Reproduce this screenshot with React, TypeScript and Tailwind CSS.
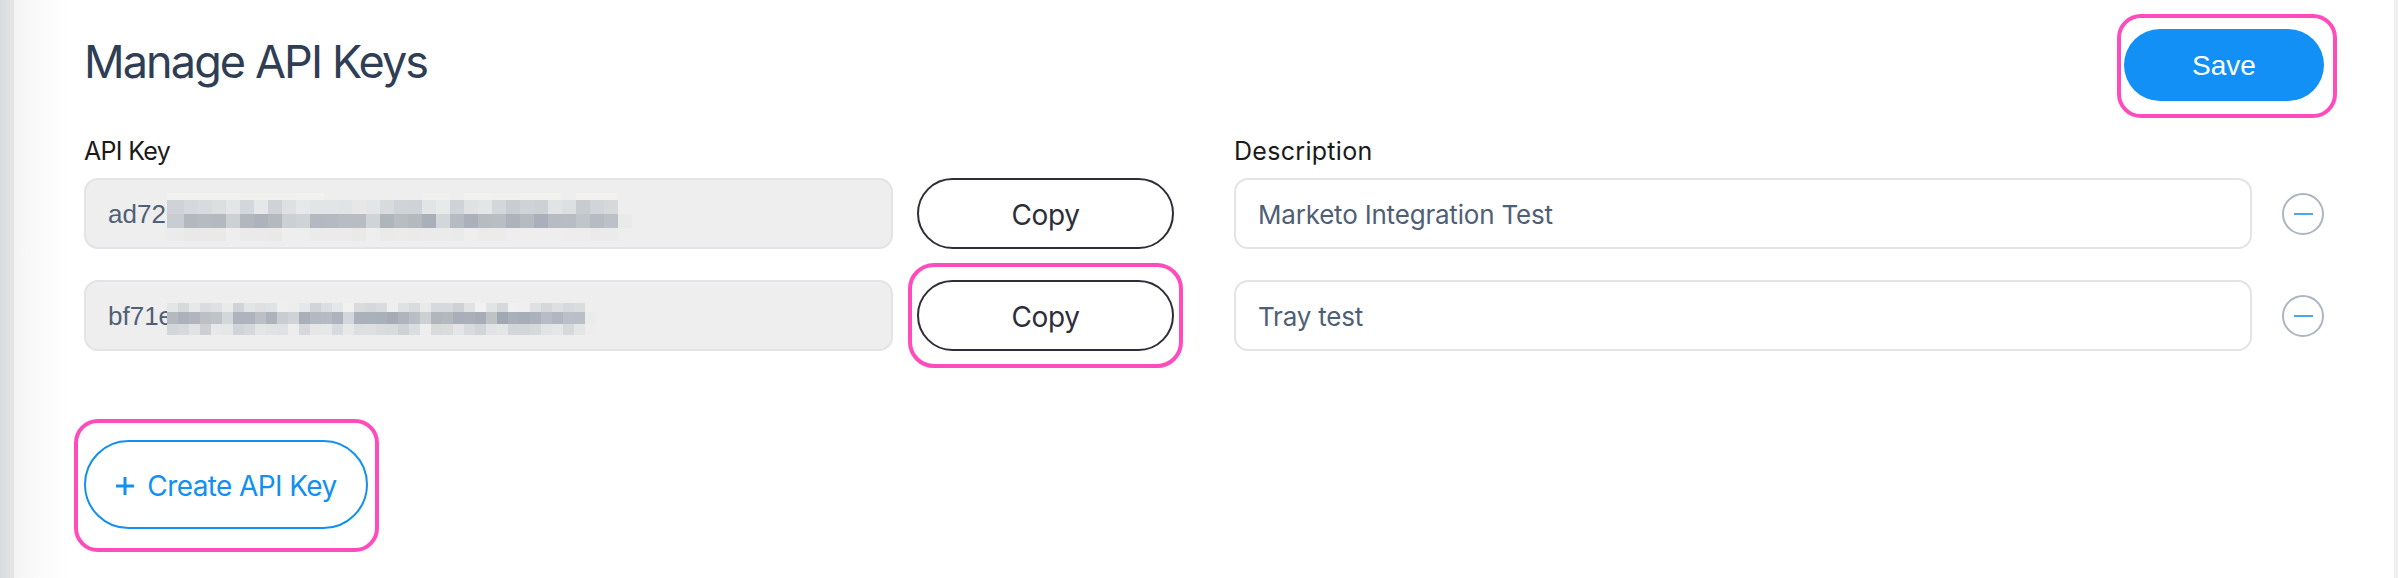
const KEY_ONE = {
  left: 81,
  top: 13,
  firstWidth: 17,
  cell: 14,
  rowHeights: [7, 14, 14, 13],
  rows: [
    'f1f1ef f1f1ef f1f1ef f1f1ef f1f1ef f0f0ef f0f0ef f0f0ef f0f0ef f1f1ef f1f1ef eeeeee eeeeee eeeeee eeeeee eeeeee eeeeee eeeeee f0f0ee f0f0ee eeeeee f1f1ef f1f1ef f0f0ee f0f0ee f1f1ef f1f1ef f1f1ef eeeeee f2f1ef f2f1ef f2f1ef eeeeee',
    'cfd2d6 d6d8db d8dadd dcdee0 e4e5e7 d3d6da e6e7e9 cfd2d7 dfe0e2 e7e8e9 e3e4e6 e3e4e6 e1e3e4 e7e7e8 e4e5e6 d8dadc d0d3d7 cfd2d6 e3e4e6 e8e9e9 cfd3d8 e0e1e3 e4e5e6 d4d7da c9ccd1 cfd2d6 cdd0d4 e2e3e4 dedfe0 c8ccd1 d1d4d8 d6d8da eeeeee',
    'c9cdd1 b3b8c0 b6bac1 b4b9c0 cdd1d4 b2b7be adb3bd b4b9c0 ccd0d5 cfd3d6 b3b8c1 b5bac2 b8bdc3 b8bcc3 d0d3d7 aeb5bb b8bdc2 b4b9c0 a9b0ba d3d7da b5bbc2 aab1bc b7bcc1 b9bec2 adb3bd b6bbc2 a9b0bb b7bbc3 b8bcc3 c0c5c9 b7bcc4 bcc0c7 e9ebea',
    'ebebeb e9e9e9 e9e9e9 e9e9e9 eeeeee eaeaea eaeaea e9e9e9 eeeeee eeeeee ebebeb ebebeb ebebeb e9e9e9 eeeeee eaeaea ebebeb eaeaea ebebeb ebebeb e9ebea eeeeee ebebeb ebebeb eeeeee eeeeee eeeeee eeeeee ededed ededed ebebeb ebebeb eeeeee',
  ],
}

const KEY_TWO = {
  left: 81,
  top: 21,
  firstWidth: 11,
  cell: 11,
  rowHeights: [9, 12, 11],
  rows: [
    'e4e5e6 d7d9db e7e8e9 dadbde dfe0e2 e9eaea cfd2d6 e3e4e6 dfe0e2 e1e2e4 efefef ededed e6e7e8 d1d5d8 dcdee1 e6e7e9 f1f1f0 d9dbdd d5d8da dadbde efefef e0e1e3 d9dbdd e8e9e9 d7dadc d7dadc cfd2d5 e1e2e3 f2f2f2 e2e3e5 d6d9db eff0f0 efefef dee0e1 d5d7da dedfe1 d7dadc dadcdd eeeeee',
    'b4b9bd abb2bb b0b5be bcc0c5 c0c4c8 d3d7d9 adb4bd aeb4bd bcc0c4 acb3bd c9ccd0 d0d3d5 a9afb9 b3b8c1 b6bac3 acb3bd d4d6db abb1ba abb1ba a9b0b9 a5acb6 b0b5bd b9bdc5 ccd0d3 b1b6bd b4b9bd a8afb9 a9b0b9 a6adb7 bfc3c5 a0a8b3 a9b0b9 a5adb6 abb2ba b9bcc6 b2b6c0 bbbfc7 babec7 ebebeb',
    'd2d5d9 d7d9dc e1e2e4 cbced3 e8e8ea e5e6e8 d0d3d7 d6d8db e4e5e7 e1e2e4 e0e1e3 ededed d6d8db e6e6e8 e6e7e8 d7dade e8e8e9 dcdee0 dddfe1 dadbdd d8dadc cfd2d5 dcdde0 eeeeee d8dadc d9dbdd e4e5e6 d9dadd d2d5d8 e2e3e5 e4e5e6 d3d6d8 d3d6d8 d6d8da e2e3e5 e5e6e7 d6d8db e4e5e6 ededed',
  ],
}

type MosaicData = typeof KEY_ONE

// the pixelated part of a redacted key
function Mosaic({ data }: { data: MosaicData }) {
  const rows = data.rows.map((r) => r.split(' '))
  const width = data.firstWidth + (rows[0].length - 1) * data.cell
  const height = data.rowHeights.reduce((a, b) => a + b, 0)
  let y = 0

  return (
    <svg
      className="absolute"
      style={{ left: data.left, top: data.top }}
      width={width}
      height={height}
      shapeRendering="crispEdges"
    >
      {rows.map((row, r) => {
        const rowY = y
        y += data.rowHeights[r]
        return row.map((color, c) => (
          <rect
            key={`${r}-${c}`}
            x={c === 0 ? 0 : data.firstWidth + (c - 1) * data.cell}
            y={rowY}
            width={c === 0 ? data.firstWidth : data.cell}
            height={data.rowHeights[r]}
            fill={`#${color}`}
          />
        ))
      })}
    </svg>
  )
}

function Highlight({ className }: { className: string }) {
  return <span className={`absolute border-[4px] border-[#ff4bbb] pointer-events-none ${className}`} />
}

function KeyRow({
  prefix,
  description,
  mosaic,
  highlighted,
}: {
  prefix: string
  description: string
  mosaic: MosaicData
  highlighted?: boolean
}) {
  return (
    <div className="flex items-center h-[71px]">
      <div className="relative w-[809px] h-full flex items-center pl-[22px] pt-[2px] rounded-[14px] border-2 border-[#e3e3e8] bg-[#eeeeee] text-[26px] text-[#4f6076] font-['Liberation_Sans',sans-serif] overflow-hidden">
        {prefix}
        <Mosaic data={mosaic} />
      </div>
      <div className="relative ml-6 w-[257px] h-full">
        <button className="w-full h-full pt-[2px] rounded-full border-2 border-[#2e2e3a] bg-white text-[28px] text-[#2e2e3a] tracking-[-0.4px]">
          Copy
        </button>
        {highlighted && <Highlight className="-left-[9px] -right-[9px] -top-[17px] -bottom-[17px] rounded-[26px]" />}
      </div>
      <div className="ml-[60px] flex-1 h-full flex items-center pl-[22px] pt-[2px] rounded-[14px] border-2 border-[#e3e3e8] bg-white text-[26px] text-[#4f6076] tracking-[-0.2px]">
        {description}
      </div>
      <button className="ml-[30px] w-[42px] h-[42px] rounded-full border-2 border-[#aeb4c0] flex items-center justify-center">
        <span className="w-[19px] h-[2px] bg-[#4aa8e8]" />
      </button>
    </div>
  )
}

export default function App() {
  return (
    <div className="h-[578px] overflow-hidden bg-white bg-[linear-gradient(to_right,#d9dadc_0px,#e6e6e8_14px,#f4f4f4_14px,#fbfbfb_40px,#ffffff_70px)] font-['Inter',sans-serif]">
      <div className="h-full pl-[84px] pr-[70px] pt-[29px] border-r-[4px] border-[#efeff0]">
        <div className="flex items-center justify-between h-[72px]">
          <h1 className="text-[45px] leading-none text-[#2f3e55] tracking-[-1.9px] -mt-[8px]">Manage API Keys</h1>
          <div className="relative">
            <button className="w-[200px] h-[72px] pt-[2px] rounded-full bg-[#1290f5] text-white text-[28px] font-['Liberation_Sans',sans-serif]">
              Save
            </button>
            <Highlight className="-left-[7px] -right-[13px] -top-[15px] -bottom-[17px] rounded-[24px]" />
          </div>
        </div>

        <div className="flex h-[77px] pt-[35px] text-[25px] leading-[30px] text-[#1a1a1a]">
          <div className="w-[1150px] tracking-[-0.7px]">API Key</div>
          <div className="tracking-[0.3px]">Description</div>
        </div>

        <div className="flex flex-col gap-[31px]">
          <KeyRow prefix="ad72" description="Marketo Integration Test" mosaic={KEY_ONE} />
          <KeyRow prefix="bf71e" description="Tray test" mosaic={KEY_TWO} highlighted />
        </div>

        <div className="relative w-[284px] mt-[89px]">
          <button className="w-full h-[89px] pt-[2px] rounded-full border-2 border-[#1290f0] flex items-center justify-center gap-3 text-[28px] text-[#118ff3] tracking-[-0.6px]">
            <svg width="20" height="20" viewBox="0 0 20 20" className="shrink-0">
              <path d="M10 1v18M1 10h18" stroke="#118ff3" strokeWidth="3" />
            </svg>
            Create API Key
          </button>
          <Highlight className="-left-[10px] -right-[11px] -top-[21px] -bottom-[23px] rounded-[24px]" />
        </div>
      </div>
    </div>
  )
}
